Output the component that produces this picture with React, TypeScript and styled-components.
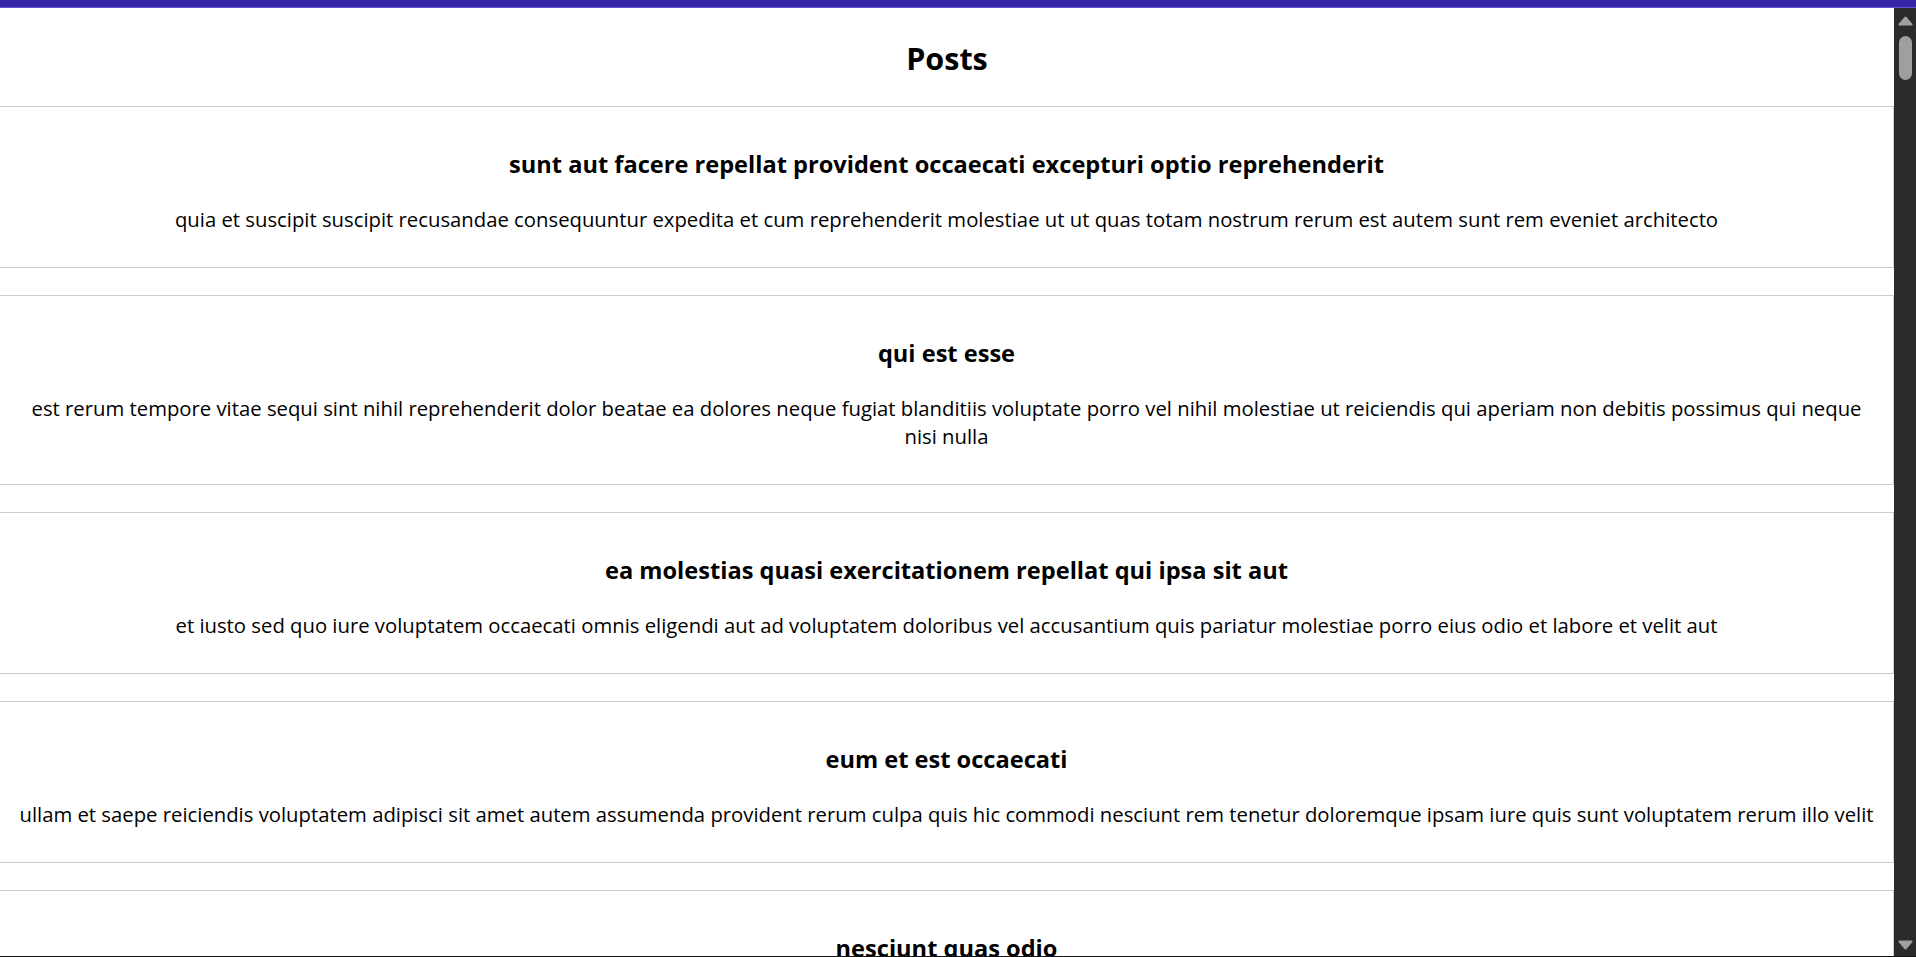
import React from "react";
import styled, { createGlobalStyle } from "styled-components";

type Post = { id: number; title: string; body: string };

const SOURCE: Omit<Post, "id">[] = [
  {
    title: "sunt aut facere repellat provident occaecati excepturi optio reprehenderit",
    body: "quia et suscipit suscipit recusandae consequuntur expedita et cum reprehenderit molestiae ut ut quas totam nostrum rerum est autem sunt rem eveniet architecto",
  },
  {
    title: "qui est esse",
    body: "est rerum tempore vitae sequi sint nihil reprehenderit dolor beatae ea dolores neque fugiat blanditiis voluptate porro vel nihil molestiae ut reiciendis qui aperiam non debitis possimus qui neque nisi nulla",
  },
  {
    title: "ea molestias quasi exercitationem repellat qui ipsa sit aut",
    body: "et iusto sed quo iure voluptatem occaecati omnis eligendi aut ad voluptatem doloribus vel accusantium quis pariatur molestiae porro eius odio et labore et velit aut",
  },
  {
    title: "eum et est occaecati",
    body: "ullam et saepe reiciendis voluptatem adipisci sit amet autem assumenda provident rerum culpa quis hic commodi nesciunt rem tenetur doloremque ipsam iure quis sunt voluptatem rerum illo velit",
  },
  {
    title: "nesciunt quas odio",
    body: "repudiandae veniam quaerat sunt sed alias aut fugiat sit autem sed est voluptatem omnis possimus esse voluptatibus quis est aut tenetur dolor neque",
  },
  {
    title: "dolorem eum magni eos aperiam quia",
    body: "ut aspernatur corporis harum nihil quis provident sequi mollitia nobis aliquid molestiae perspiciatis et ea nemo ab reprehenderit accusantium quas voluptate dolores velit et doloremque molestiae",
  },
  {
    title: "magnam facilis autem",
    body: "dolore placeat quibusdam ea quo vitae magni quis enim qui quis quo nemo aut saepe quidem repellat excepturi ut quia sunt ut sequi eos ea sed quas",
  },
  {
    title: "dolorem dolore est ipsam",
    body: "dignissimos aperiam dolorem qui eum facilis quibusdam animi sint suscipit qui sint possimus cum quaerat magni maiores excepturi ipsam ut commodi dolor voluptatum modi aut vitae",
  },
  {
    title: "nesciunt iure omnis dolorem tempora et accusantium",
    body: "consectetur animi nesciunt iure dolore enim quia ad veniam autem ut quam aut nobis et est aut quod aut provident voluptas autem voluptas",
  },
  {
    title: "optio molestias id quia eum",
    body: "quo et expedita modi cum officia vel magni doloribus qui repudiandae vero nisi sit quos veniam quod sed accusamus veritatis error",
  },
];

const POSTS: Post[] = Array.from({ length: 100 }, (_, i) => ({
  id: i + 1,
  ...SOURCE[i % SOURCE.length],
}));

const GlobalStyle = createGlobalStyle`
  html, body {
    margin: 0;
    padding: 0;
    height: 100%;
    overflow: hidden;
    background: #ffffff;
  }
  body {
    font-family: "Open Sans", "Noto Sans", sans-serif;
    color: #000000;
  }
  #root { height: 100%; }
`;

const Frame = styled.div`
  height: 100vh;
  display: flex;
  flex-direction: column;
`;

const TopBar = styled.div`
  flex: 0 0 7px;
  background: #3724a9;
  border-bottom: 1px solid #6152cf;
`;

const BottomEdge = styled.div`
  flex: 0 0 1px;
  background: #141414;
`;

const Viewport = styled.div`
  flex: 1 1 auto;
  min-height: 0;
  display: flex;
`;

const Scroller = styled.main`
  flex: 1 1 auto;
  min-width: 0;
  overflow-y: auto;
  overflow-x: hidden;
  scrollbar-width: none;
  &::-webkit-scrollbar {
    display: none;
  }
`;

const Rail = styled.div`
  flex: 0 0 22px;
  background: #2b2b2b;
  display: flex;
  flex-direction: column;
  align-items: center;
  padding: 8px 0 6px;
  box-sizing: border-box;
`;

const RailArrow = styled.svg`
  display: block;
  width: 15px;
  height: 10px;
  flex: 0 0 auto;
`;

const Thumb = styled.div`
  width: 13px;
  height: 44px;
  margin: 10px 0 0 1px;
  border-radius: 7px;
  background: #9f9f9f;
`;

const RailSpacer = styled.div`
  flex: 1 1 auto;
`;

const Header = styled.header`
  padding: 29px 0 26px;
  text-align: center;
`;

const PageTitle = styled.h1`
  margin: 0;
  font-size: 30.5px;
  line-height: 43px;
  font-weight: 700;
`;

const PostList = styled.section`
  display: flex;
  flex-direction: column;
  gap: 27px;
`;

const Card = styled.article`
  padding: 41px 16px 34px;
  border-top: 1px solid #cccccc;
  border-bottom: 1px solid #cccccc;
  border-right: 1px solid #cccccc;
  text-align: center;
`;

const PostTitle = styled.h2`
  margin: 0 0 25px;
  font-size: 23.6px;
  line-height: 32px;
  font-weight: 700;
`;

const PostBody = styled.p`
  margin: 0;
  font-size: 20.3px;
  line-height: 28px;
`;

function ArrowIcon({ down }: { down?: boolean }) {
  return (
    <RailArrow viewBox="0 0 15 10" aria-hidden="true">
      <polygon
        points={down ? "1.5,1.5 13.5,1.5 7.5,8.5" : "7.5,1.5 13.5,8.5 1.5,8.5"}
        fill="#9f9f9f"
        stroke="#9f9f9f"
        strokeWidth="2"
        strokeLinejoin="round"
      />
    </RailArrow>
  );
}

export default function App() {
  return (
    <>
      <GlobalStyle />
      <Frame>
        <TopBar />
        <Viewport>
          <Scroller>
            <Header>
              <PageTitle>Posts</PageTitle>
            </Header>
            <PostList>
              {POSTS.map((post) => (
                <Card key={post.id}>
                  <PostTitle>{post.title}</PostTitle>
                  <PostBody>{post.body}</PostBody>
                </Card>
              ))}
            </PostList>
          </Scroller>
          <Rail aria-hidden="true">
            <ArrowIcon />
            <Thumb />
            <RailSpacer />
            <ArrowIcon down />
          </Rail>
        </Viewport>
        <BottomEdge />
      </Frame>
    </>
  );
}
